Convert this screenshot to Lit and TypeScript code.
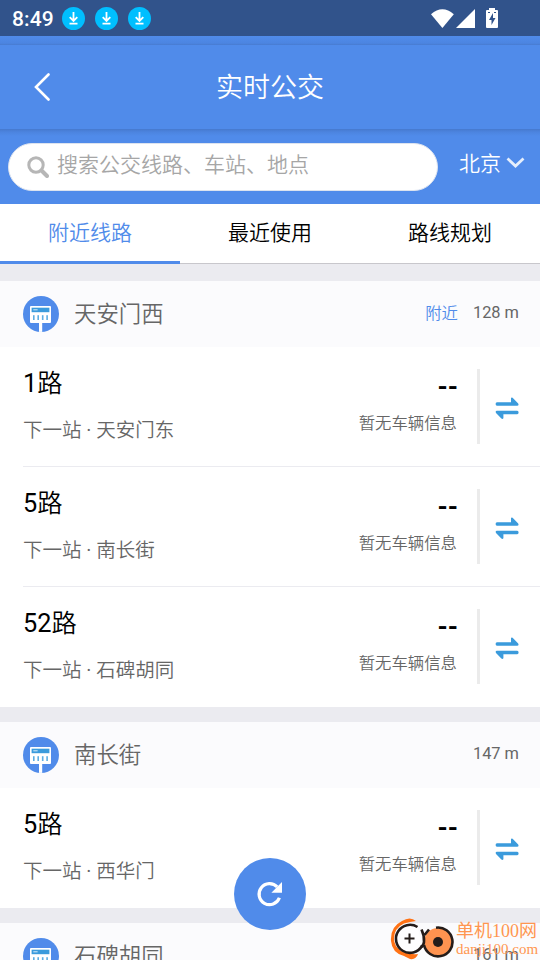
import { LitElement, html, css, svg } from "lit";
import { customElement } from "lit/decorators.js";

interface Route { line: string; next: string; }
interface Station { name: string; distance: string; nearby?: boolean; routes: Route[]; }

const stations: Station[] = [
  { name: "天安门西", distance: "128 m", nearby: true, routes: [
    { line: "1", next: "天安门东" },
    { line: "5", next: "南长街" },
    { line: "52", next: "石碑胡同" },
  ] },
  { name: "南长街", distance: "147 m", routes: [{ line: "5", next: "西华门" }] },
  { name: "石碑胡同", distance: "161 m", routes: [] },
];

const downloadIcon = html`<svg class="dl" width="23" height="23" viewBox="0 0 23 23">
  <circle cx="11.5" cy="11.5" r="11.5" fill="#00bfff" />
  <path d="M11.5 5V13.6M7.7 10.2L11.5 14L15.3 10.2M7.5 16.6H15.5" fill="none" stroke="#fff" stroke-width="1.8" />
</svg>`;

const stopIcon = html`<svg width="36" height="36" viewBox="0 0 36 36">
  <circle cx="18" cy="18" r="18" fill="#508bea" />
  <path d="M16 26H19.2V35.9H16Z" fill="#fff" />
  <rect x="7" y="10" width="21" height="17" rx="1" fill="#fff" />
  <rect x="8.6" y="11.7" width="17.8" height="4.5" fill="#3b9bdc" />
  <rect x="10.3" y="13.1" width="4.3" height="1.3" fill="#b5daf2" />
  ${[10, 14.4, 18.9, 23.3].map((x) => svg`<rect x=${x} y="19.2" width="1.6" height="4.8" fill="#5daee3" />`)}
</svg>`;

const swapIcon = html`<svg width="24" height="23" viewBox="0 0 24 23">
  <path d="M2 5.2H16V1Q16.6 0 17.6 0.8L23.2 6.4Q24.2 8.7 22.2 8.7H2Q0.6 8.5 0.6 7T2 5.2Z" fill="#3b9bdc" />
  <path d="M22.2 17.2H8.4V21.2Q7.6 22.6 6.4 21.6L1 16Q0 13.7 2 13.7H22.2Q23.6 13.9 23.6 15.4T22.2 17.2Z" fill="#3b9bdc" />
</svg>`;

@customElement("app-root")
export class AppRoot extends LitElement {
  static styles = css`
    :host { display: block; position: relative; width: 540px; height: 960px; overflow: hidden; background: #ebebf0;
      font-family: Roboto, "Noto Sans CJK SC", sans-serif; font-weight: 350; color: #000; }
    * { box-sizing: border-box; }
    svg { display: block; flex: none; }
    .status { height: 36px; background: #31538b; display: flex; align-items: center; padding: 1px 41px 0 12px; color: #fff; }
    .clock { font-size: 21px; font-weight: 500; letter-spacing: .1px; line-height: 36px; width: 50px; white-space: nowrap; }
    .dl { margin-right: 10px; }
    .sys { margin-left: auto; }
    .strip { height: 9px; background: linear-gradient(#508bea, #4c85e1 80%, #487bcf); }
    .nav { height: 84px; background: #508bea; display: grid; grid-template-columns: 90px 1fr 90px; align-items: center; color: #fff; }
    .back { margin-left: 33px; }
    .title { text-align: center; font-size: 27px; line-height: 40px; padding-top: 1px; }
    .search-bar { height: 75px; display: flex; padding: 14px 15px 0 8px; color: #fff;
      background: linear-gradient(#4679ce, #4c84df 3px, #508bea 7px); }
    .search { flex: none; width: 430px; height: 48px; border-radius: 24px; background: #fff; border: 1px solid #dce3ef; display: flex; align-items: center; padding-left: 18px; color: #a6a6a6; font-size: 21px; }
    .placeholder { margin: -5px 0 0 8px; line-height: 32px; }
    .city { flex: none; display: flex; margin-left: 21px; font-size: 21px; line-height: 32px; height: 41px; align-items: center; white-space: nowrap; }
    .chev { margin: -2px 0 0 5px; }
    .tabs { height: 60px; display: grid; grid-template-columns: repeat(3, 1fr); background: #fff; border-bottom: 1px solid #c8c7cc; font-size: 21px; line-height: 59px; text-align: center; }
    .tab { height: 60px; }
    .tab.active { color: #508bea; border-bottom: 3px solid #508bea; }
    .list { padding-top: 17px; display: flex; flex-direction: column; gap: 15px; }
    .station { height: 66px; background: #fbfbfd; display: flex; align-items: center; padding: 0 21px 0 23px; color: #666; }
    .station-name { font-size: 22.4px; line-height: 34px; margin: -1px 0 0 15px; flex: 1; }
    .nearby { color: #508bea; font-size: 16.4px; margin: -4px 15px 0 0; }
    .distance, .num { font-weight: 400; }
    .distance { font-size: 16.4px; margin-top: -3px; }
    .routes { background: #fff; }
    .route { height: 120px; margin-left: 23px; padding: 0 21px 0 0; display: flex; border-bottom: 1px solid #ebebf0; }
    .route:last-child { border-color: transparent; }
    .info { flex: 1; padding-top: 18px; }
    .route-name { font-size: 25.3px; line-height: 38px; }
    .next { font-size: 19.5px; line-height: 30px; color: #666; margin-top: 13px; }
    .eta { text-align: right; padding-top: 23px; }
    .dash { font-size: 26px; font-weight: 700; line-height: 34px; margin-right: -1px; }
    .none { font-size: 16.4px; line-height: 26px; color: #666; margin-top: 7px; }
    .rule { width: 3px; height: 75px; background: #ebebeb; margin: 22px 15px 0 20px; }
    .swap { padding-top: 50px; }
    .refresh { position: absolute; left: 234px; top: 858px; width: 72px; height: 72px; border-radius: 50%; background: #508bea; }
    .mark { position: absolute; left: 390px; top: 917px; display: flex; color: #ff9650; font-weight: 400; }
    .mark-text { margin-left: 2px; white-space: nowrap; }
    .mark-cn { font: 18px/27px "Liberation Serif", "Noto Sans CJK SC", serif; padding-top: 1px; }
    .mark-url { font: 15px/18px "Liberation Serif", serif; margin-top: -5px; }
  `;

  private renderRoute(r: Route) {
    return html`<div class="route">
      <div class="info"><div class="route-name"><span class="num">${r.line}</span>路</div><div class="next">下一站<span class="num"> · </span>${r.next}</div></div>
      <div class="eta"><div class="dash">--</div><div class="none">暂无车辆信息</div></div>
      <div class="rule"></div>
      <div class="swap">${swapIcon}</div>
    </div>`;
  }

  render() {
    return html`
      <div class="status">
        <div class="clock">8:49</div>
        ${downloadIcon}${downloadIcon}${downloadIcon}
        <svg class="sys" width="68" height="22" viewBox="0 0 68 22">
          <path d="M0 6.2Q11.4-3.8 22.8 6.2L11.4 20Z" fill="#fff" />
          <path d="M44 1V20H25Z" fill="#fff" />
          <path d="M58 0H64V2H66Q67 2 67 3V19Q67 20 66 20H56Q55 20 55 19V3Q55 2 56 2H58Z" fill="#fff" />
          <path d="M62 5L58 12H60.5V17L64.5 10H62ZM57 4H59V5H57ZM63 4H65V5H63Z" fill="#31538b" />
        </svg>
      </div>
      <div class="strip"></div>
      <div class="nav">
        <svg class="back" width="18" height="28" viewBox="0 0 18 28"><path d="M15.5 1.5L3 14L15.5 26.5" fill="none" stroke="#fff" stroke-width="2.6" stroke-linecap="round" /></svg>
        <div class="title">实时公交</div>
      </div>
      <div class="search-bar">
        <div class="search">
          <svg width="22" height="22" viewBox="0 0 22 22"><circle cx="9" cy="9" r="7.2" fill="none" stroke="#b6b6b6" stroke-width="3" /><path d="M14.5 14.5L20 20" stroke="#b6b6b6" stroke-width="4" stroke-linecap="round" /></svg>
          <div class="placeholder">搜索公交线路、车站、地点</div>
        </div>
        <div class="city">北京<svg class="chev" width="19" height="12" viewBox="0 0 19 12"><path d="M1.5 1.5L9.5 9L17.5 1.5" fill="none" stroke="#e5eefc" stroke-width="2.8" /></svg></div>
      </div>
      <div class="tabs"><div class="tab active">附近线路</div><div class="tab">最近使用</div><div class="tab">路线规划</div></div>
      <div class="list">
        ${stations.map((s) => html`<section>
          <div class="station">${stopIcon}<div class="station-name">${s.name}</div>
            ${s.nearby ? html`<div class="nearby">附近</div>` : ""}<div class="distance">${s.distance}</div></div>
          <div class="routes">${s.routes.map((r) => this.renderRoute(r))}</div>
        </section>`)}
      </div>
      <div class="refresh"><svg width="72" height="72" viewBox="0 0 72 72">
        <path d="M43.2 28.9A10.5 10.5 0 1 0 45.4 39.8" fill="none" stroke="#fff" stroke-width="3.2" />
        <path d="M48 24V34.8H37.4Z" fill="#fff" />
      </svg></div>
      <div class="mark">
        <svg width="64" height="43" viewBox="0 0 64 43">
          <path d="M26 4Q20-1 12 4Q0 10 1 24Q2 36 14 39L20 42Q26 43 28 37Q19 38 11 34Q4 29 4 22Q4 11 14 6.5Q20 4.5 26 4Z" fill="#ff7215" />
          <path d="M27.5 10A14 14 0 1 0 32 29" fill="#fff" fill-opacity=".8" stroke="#241c1a" stroke-width="2.6" />
          <circle cx="48" cy="25" r="14" fill="#ff9350" />
          <path d="M31.5 12.5Q34.5 19 34 25Q33.500 29 31 30M34.500 18L39 12.500" fill="none" stroke="#241c1a" stroke-width="2.6" />
          <path d="M46 10.700A14.400 14.400 0 1 1 34 28" fill="none" stroke="#241c1a" stroke-width="2.6" />
          <circle cx="48" cy="25" r="5" fill="#241c1a" />
          <path d="M19.5 16.5V26.5M14.5 21.5H24.5" stroke="#241c1a" stroke-width="2" />
        </svg>
        <div class="mark-text"><div class="mark-cn">单机100网</div><div class="mark-url">danji100.com</div></div>
      </div>`;
  }
}
